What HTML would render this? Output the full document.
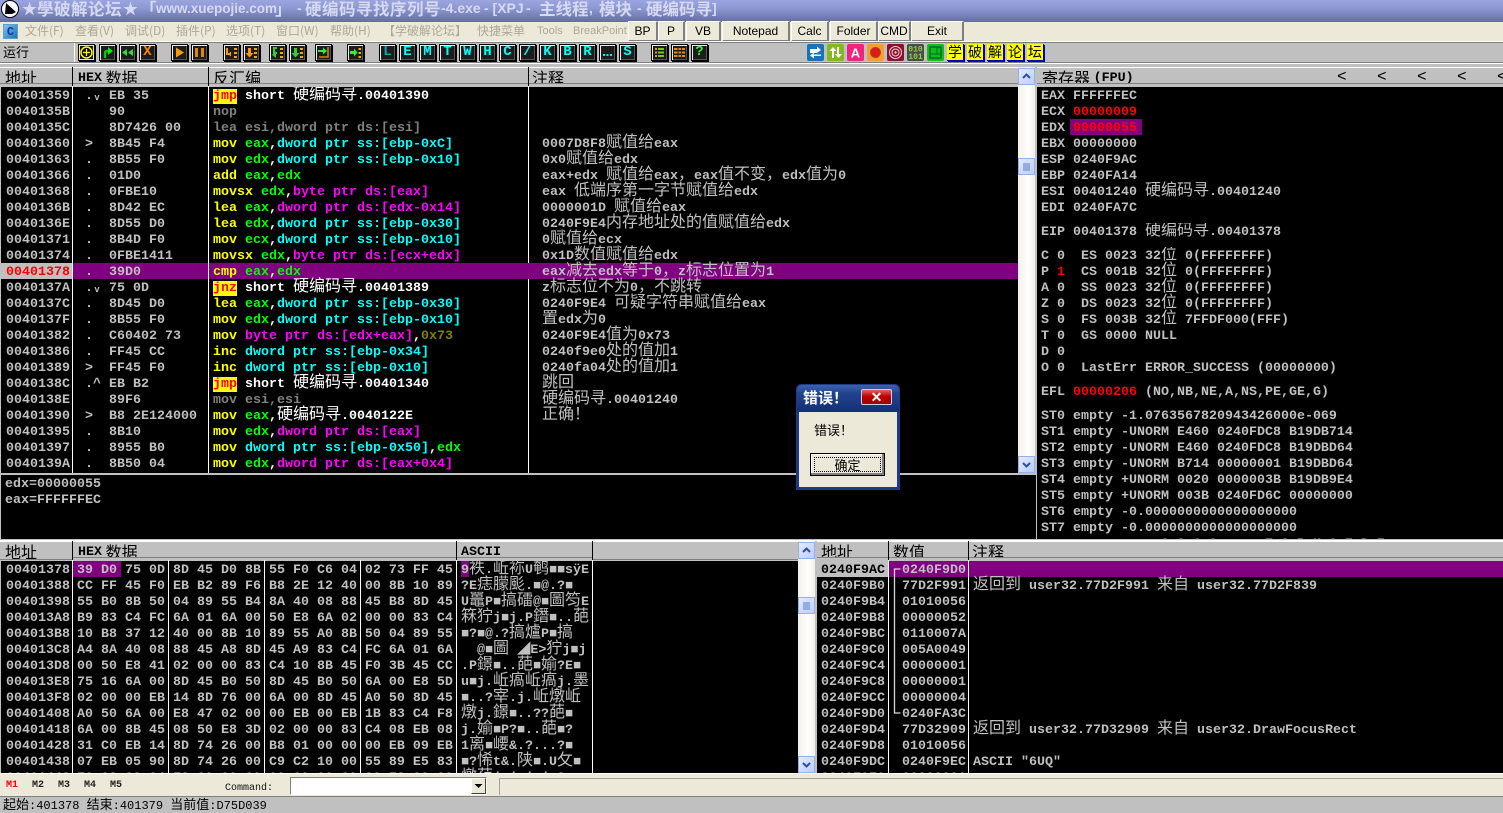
<!DOCTYPE html>
<html><head><meta charset="utf-8"><title>OllyDbg</title>
<style>
html,body{margin:0;padding:0;width:1503px;height:813px;overflow:hidden;background:#c0c0c0}
body{position:relative;font-family:"Liberation Mono","Noto Sans CJK SC",monospace}
.p{position:absolute}
.m{position:absolute;font:bold 13.33px/16px "Liberation Mono","Noto Sans CJK SC",monospace;color:#c0c0c0;white-space:pre;overflow:hidden;padding-top:2px;box-sizing:border-box}
i{font:normal 16px/0 "Noto Sans CJK SC","WenQuanYi Zen Hei",sans-serif;letter-spacing:0}
u{text-decoration:none}
.g{color:#0f0}.c{color:#0ff}.f{color:#f0f}.y{color:#ff0}.w{color:#fff}.d{color:#808080}.o{color:#808000}.r{color:#f00}
.j{background:#ff0;color:#f00}
.h{position:absolute;background:#c0c0c0;border-top:1px solid #fff;border-bottom:1px solid #808080;height:17px;font:normal 16px/18px "Noto Sans CJK SC",sans-serif;color:#000;white-space:pre;overflow:hidden;box-sizing:content-box}
.h b{font:bold 13.33px/18px "Liberation Mono",monospace;position:relative;top:-3px}
.v{position:absolute;width:1px;background:#fff}
.s{position:absolute;width:1px;background:#000}
.mn{position:absolute;top:23px;font:12px/16px "Noto Sans CJK SC","Liberation Sans",sans-serif;color:#aca899;white-space:pre}
.bt{position:absolute;top:21px;height:18px;background:#ece9d8;border-right:2px solid #808080;border-bottom:2px solid #808080;border-left:1px solid #fff;border-top:1px solid #fff;font:12px/19px "Liberation Sans",sans-serif;color:#000;text-align:center;box-sizing:content-box}
.t{position:absolute;top:44px;width:15px;height:15px;background:#1c1c1c;border:1px solid #000;box-shadow:inset 1px 1px 0 #eee,inset -1px -1px 0 #555,1px 1px 0 #000;font:bold 14px/15px "Liberation Mono",monospace;color:#0ff;text-align:center;overflow:hidden}
.t svg{display:block;width:15px;height:15px}
.q{position:absolute;top:44px;width:16px;height:16px;background:#ff0;border-right:1px solid #00c;border-bottom:1px solid #00c;box-shadow:1px 1px 0 #00c;font:14px/16px "Noto Sans CJK SC",sans-serif;color:#000;text-align:center;overflow:hidden}
.k{position:absolute;top:44px;width:17px;height:17px;overflow:hidden}
.k svg{display:block;width:17px;height:17px}
.sb{position:absolute;width:17px;background:linear-gradient(90deg,#f3f1ea,#fefefd 60%,#f1efe6)}
.sa{position:absolute;left:0;width:15px;height:15px;border:1px solid #8fb2f2;background:linear-gradient(135deg,#e3ebfd,#bccdf8);color:#2a4fa8;overflow:hidden}
.sa svg{display:block;width:15px;height:15px}
.tt{position:absolute;top:0;font:bold 16.5px/17px "Noto Sans CJK SC",sans-serif;color:#d6d9f2;white-space:pre}
.tl{position:absolute;top:0;font:bold 14px/17px "Liberation Sans",sans-serif;color:#d6d9f2;white-space:pre}
.ar{position:absolute;top:67px;width:10px;height:18px;color:#000;line-height:16px;font-weight:normal;font-size:16px}
</style></head><body>

<!-- title bar -->
<div class="p" style="left:0;top:0;width:1503px;height:22px;background:linear-gradient(#9aa5e0,#8f9ad5 35%,#636d9f)"></div>
<svg class="p" style="left:1px;top:0" width="19" height="19" viewBox="0 0 19 19"><circle cx="9" cy="9" r="8.5" fill="#fff" stroke="#000"/><path d="M5 3 L15 12 L11 14 L4 14 Z" fill="#000"/></svg>
<div class="tt" style="left:22px;font-size:15px">★</div>
<div class="tt" style="left:37px;letter-spacing:.5px">學破解论坛</div>
<div class="tt" style="left:123px;font-size:15px">★</div>
<div class="tt" style="left:140px">「</div>
<div class="tl" style="left:156px;font-size:13.5px">www.xuepojie.com</div>
<div class="tt" style="left:275px">」</div>
<div class="tl" style="left:297px">-</div>
<div class="tt" style="left:305px;letter-spacing:.5px">硬编码寻找序列号</div>
<div class="tl" style="left:441px">-4.exe</div>
<div class="tl" style="left:484px">- [XPJ</div>
<div class="tl" style="left:526px">-</div>
<div class="tt" style="left:539px">主线程</div>
<div class="tl" style="left:589px">,</div>
<div class="tt" style="left:599px">模块</div>
<div class="tl" style="left:637px">-</div>
<div class="tt" style="left:646px">硬编码寻</div>
<div class="tl" style="left:712px">]</div>

<!-- menu bar -->
<div class="p" style="left:0;top:22px;width:1503px;height:19px;background:#ece9d8"></div>
<div class="p" style="left:3px;top:24px;width:15px;height:15px;background:linear-gradient(135deg,#7cc4f2,#1f6fb5);font:bold 12px/15px 'Liberation Mono',monospace;color:#123a90;text-align:center;border:1px solid #5f9fd0;box-sizing:border-box">C</div>
<div class="mn" style="left:25px">文件(F)</div>
<div class="mn" style="left:75px">查看(V)</div>
<div class="mn" style="left:125px">调试(D)</div>
<div class="mn" style="left:176px">插件(P)</div>
<div class="mn" style="left:226px">选项(T)</div>
<div class="mn" style="left:276px">窗口(W)</div>
<div class="mn" style="left:330px">帮助(H)</div>
<div class="mn" style="left:383px">【学破解论坛】</div>
<div class="mn" style="left:477px">快捷菜单</div>
<div class="mn" style="left:537px;font:11px/16px 'Liberation Sans',sans-serif">Tools</div>
<div class="mn" style="left:573px;font:11px/16px 'Liberation Sans',sans-serif">BreakPoint</div>
<div class="bt" style="left:628px;width:27px">BP</div>
<div class="bt" style="left:658px;width:24px">P</div>
<div class="bt" style="left:686px;width:32px">VB</div>
<div class="bt" style="left:722px;width:65px">Notepad</div>
<div class="bt" style="left:791px;width:35px">Calc</div>
<div class="bt" style="left:830px;width:45px">Folder</div>
<div class="bt" style="left:878px;width:30px">CMD</div>
<div class="bt" style="left:911px;width:50px">Exit</div>

<!-- toolbar -->
<div class="p" style="left:0;top:41px;width:1503px;height:1px;background:#fff"></div>
<div class="p" style="left:0;top:42px;width:1503px;height:1px;background:#808080"></div>
<div class="p" style="left:0;top:62px;width:1503px;height:1px;background:#808080"></div>
<div class="p" style="left:0;top:63px;width:1503px;height:1px;background:#fff"></div>
<div class="p" style="left:3px;top:44px;font:13px/16px 'Noto Sans CJK SC',sans-serif;color:#000">运行</div>
<div class="p" style="left:74px;top:43px;width:1px;height:19px;background:#fff"></div>

<div class="t" style="left:78px;border-color:#000;box-shadow:inset 0 0 0 1px #ff0,1px 1px 0 #000;background:#111"><svg viewBox="0 0 15 15"><circle cx="7.5" cy="7.5" r="5.5" fill="none" stroke="#ff0" stroke-width="1.4"/><path d="M4 7.5H11M7.5 4V11" stroke="#ff0" stroke-width="1.2"/></svg></div>
<div class="t" style="left:99px"><svg viewBox="0 0 15 15"><path d="M5 13V8Q5 6 8 6H9" fill="none" stroke="#0c0" stroke-width="2.4"/><path d="M8 2L13 6L8 10Z" fill="#0e0"/></svg></div>
<div class="t" style="left:119px"><svg viewBox="0 0 15 15"><path d="M7 4V11L2 7.5ZM13 4V11L8 7.5Z" fill="#3d3"/></svg></div>
<div class="t" style="left:139px;color:#f80">X</div>
<div class="t" style="left:171px"><svg viewBox="0 0 15 15"><path d="M4 2.5V12.5L12 7.5Z" fill="#f90"/></svg></div>
<div class="t" style="left:191px"><svg viewBox="0 0 15 15"><path d="M3 3H6V12H3ZM9 3H12V12H9Z" fill="#d80"/></svg></div>
<div class="t" style="left:223px"><svg viewBox="0 0 15 15"><path d="M3 3V9H7" fill="none" stroke="#f90" stroke-width="2"/><path d="M7 6.5V11.5L4 9Z" fill="#f90"/><path d="M10 3H13V5H10ZM10 7H13V9H10ZM10 11H13V13H10Z" fill="#ea0"/></svg></div>
<div class="t" style="left:243px"><svg viewBox="0 0 15 15"><path d="M4 3H7V8H9.5L5.5 12.5L1.5 8H4Z" fill="#f90"/><path d="M10 3H13V5H10ZM10 7H13V9H10ZM10 11H13V13H10Z" fill="#ea0"/></svg></div>
<div class="t" style="left:269px"><svg viewBox="0 0 15 15"><path d="M7 3H4V8H7" fill="none" stroke="#3c3" stroke-width="2"/><path d="M6 6V13L2 10Z" fill="#3c3"/><path d="M10 3H13V5H10ZM10 7H13V9H10ZM10 11H13V13H10Z" fill="#ea0"/></svg></div>
<div class="t" style="left:289px"><svg viewBox="0 0 15 15"><path d="M4 3H7V8H9.5L5.5 12.5L1.5 8H4Z" fill="#3c3"/><path d="M10 3H13V5H10ZM10 7H13V9H10ZM10 11H13V13H10Z" fill="#ea0"/></svg></div>
<div class="t" style="left:315px"><svg viewBox="0 0 15 15"><path d="M2 5H7V2.5L11 6L7 9.5V7H2Z" fill="#3e3"/><path d="M12 2V12H3" fill="none" stroke="#c80" stroke-width="1.6"/></svg></div>
<div class="t" style="left:347px"><svg viewBox="0 0 15 15"><path d="M2 6H6V3.5L9.5 7.5L6 11.5V9H2Z" fill="#3e3"/><path d="M10.5 3H13V5H10.5ZM10.5 7H13V9H10.5ZM10.5 11H13V13H10.5Z" fill="#ea0"/></svg></div>
<div class="t" style="left:379px;color:#0aa">L</div>
<div class="t" style="left:399px">E</div>
<div class="t" style="left:419px">M</div>
<div class="t" style="left:439px">T</div>
<div class="t" style="left:459px">W</div>
<div class="t" style="left:479px">H</div>
<div class="t" style="left:499px">C</div>
<div class="t" style="left:519px">/</div>
<div class="t" style="left:539px">K</div>
<div class="t" style="left:559px">B</div>
<div class="t" style="left:579px">R</div>
<div class="t" style="left:599px"><svg viewBox="0 0 15 15"><path d="M3 9H5V11H3ZM6.500 9H8.500V11H6.500ZM10 9H12V11H10Z" fill="#0ee"/></svg></div>
<div class="t" style="left:619px">S</div>
<div class="t" style="left:651px"><svg viewBox="0 0 15 15"><path d="M3 3H5V5H3ZM3 6.500H5V8.500H3ZM3 10H5V12H3Z" fill="#e90"/><path d="M6 3H12V5H6ZM6 6.500H12V8.500H6ZM6 10H12V12H6Z" fill="#7c0"/></svg></div>
<div class="t" style="left:671px"><svg viewBox="0 0 15 15"><path d="M2 3H13V5H2ZM2 6.500H13V8.500H2ZM2 10H13V12H2Z" fill="#e80"/><path d="M5.500 3H6.500V12H5.500ZM9 3H10V12H9Z" fill="#222"/></svg></div>
<div class="t" style="left:691px;color:#3e3">?</div>

<div class="k" style="left:807px"><svg viewBox="0 0 17 17"><rect width="17" height="17" rx="2" fill="#1a72b8"/><path d="M3 5H10V2.500L14 6L10 9H3Z" fill="#fff"/><path d="M14 12H7V14.500L3 11.500L7 8.500V10.500H14Z" fill="#dff"/></svg></div>
<div class="k" style="left:827px"><svg viewBox="0 0 17 17"><rect width="17" height="17" rx="2" fill="#84b81c"/><path d="M5 14V7H2.500L6 3L9.500 7H7V14Z" fill="#fff"/><path d="M10 3V10H8L11.500 14L15 10H12V3Z" fill="#fff"/></svg></div>
<div class="k" style="left:847px"><svg viewBox="0 0 17 17"><rect width="17" height="17" rx="2" fill="#f0247c"/><text x="8.500" y="13.500" font-family="Liberation Sans" font-weight="bold" font-size="13" fill="#fff" text-anchor="middle">A</text></svg></div>
<div class="k" style="left:867px"><svg viewBox="0 0 17 17"><rect width="17" height="17" rx="2" fill="#f0a030"/><circle cx="8.500" cy="8.500" r="5" fill="#e01818" stroke="#b04020"/></svg></div>
<div class="k" style="left:887px"><svg viewBox="0 0 17 17"><rect width="17" height="17" rx="2" fill="#8c1030"/><circle cx="8.500" cy="8.500" r="6" fill="none" stroke="#f0d0d0"/><circle cx="8.500" cy="8.500" r="3.500" fill="none" stroke="#f0d0d0"/><circle cx="8.500" cy="8.500" r="1.200" fill="#f0d0d0"/></svg></div>
<div class="k" style="left:907px"><svg viewBox="0 0 17 17"><rect width="17" height="17" rx="2" fill="#4c4c4c"/><text x="8.500" y="7.500" font-family="Liberation Mono" font-weight="bold" font-size="8" fill="#8ad040" text-anchor="middle">010</text><text x="8.500" y="15" font-family="Liberation Mono" font-weight="bold" font-size="8" fill="#8ad040" text-anchor="middle">101</text></svg></div>
<div class="k" style="left:927px"><svg viewBox="0 0 17 17"><rect width="17" height="17" rx="2" fill="#0cc018"/><rect x="3" y="3" width="11" height="11" fill="none" stroke="#063" stroke-width="1.500"/><path d="M3 10H14M10 3V10" stroke="#063"/></svg></div>
<div class="q" style="left:947px">学</div>
<div class="q" style="left:967px">破</div>
<div class="q" style="left:987px">解</div>
<div class="q" style="left:1007px">论</div>
<div class="q" style="left:1027px">坛</div>

<!-- disasm headers -->
<div class="h" style="left:0;top:67px;width:72px;padding-left:5px;box-sizing:border-box">地址</div>
<div class="h" style="left:73px;top:67px;width:135px;padding-left:5px;box-sizing:border-box"><b>HEX</b> 数据</div>
<div class="h" style="left:209px;top:67px;width:319px;padding-left:4px;box-sizing:border-box">反汇编</div>
<div class="h" style="left:529px;top:67px;width:489px;padding-left:3px;box-sizing:border-box">注释</div>
<div class="s" style="left:72px;top:67px;height:19px"></div>
<div class="s" style="left:208px;top:67px;height:19px"></div>
<div class="s" style="left:528px;top:67px;height:19px"></div>

<!-- disasm body -->
<div class="p" style="left:1px;top:87px;width:1017px;height:386px;background:#000"></div>
<div class="p" style="left:0;top:263px;width:72px;height:16px;background:#c0c0c0"></div>
<div class="p" style="left:73px;top:263px;width:945px;height:16px;background:#800080"></div>
<div class="v" style="left:72px;top:86px;height:387px"></div>
<div class="v" style="left:208px;top:86px;height:387px"></div>
<div class="v" style="left:528px;top:86px;height:177px"></div>
<div class="v" style="left:528px;top:279px;height:194px"></div>

<div class="m" style="left:6px;top:87px;width:66px;height:386px">00401359
0040135B
0040135C
00401360
00401363
00401366
00401368
0040136B
0040136E
00401371
00401374
<u class="r">00401378</u>
0040137A
0040137C
0040137F
00401382
00401386
00401389
0040138C
0040138E
00401390
00401395
00401397
0040139A</div>
<div class="m" style="left:85px;top:87px;width:22px;height:386px">.ᵥ


&gt;
.
.
.
.
.
.
.
.
.ᵥ
.
.
.
.
&gt;
.^

&gt;
.
.
.</div>
<div class="m" style="left:109px;top:87px;width:98px;height:386px">EB 35
90
8D7426 00
8B45 F4
8B55 F0
01D0
0FBE10
8D42 EC
8D55 D0
8B4D F0
0FBE1411
39D0
75 0D
8D45 D0
8B55 F0
C60402 73
FF45 CC
FF45 F0
EB B2
89F6
B8 2E124000
8B10
8955 B0
8B50 04</div>
<div class="m" style="left:213px;top:87px;width:314px;height:386px"><u class="j">jmp</u> <u class="w">short <i>硬编码寻</i>.00401390</u>
<u class="d">nop</u>
<u class="d">lea esi,dword ptr ds:[esi]</u>
<u class="y">mov</u> <u class="g">eax</u><u class="w">,</u><u class="c">dword ptr ss:[ebp-0xC]</u>
<u class="y">mov</u> <u class="g">edx</u><u class="w">,</u><u class="c">dword ptr ss:[ebp-0x10]</u>
<u class="y">add</u> <u class="g">eax</u><u class="w">,</u><u class="g">edx</u>
<u class="y">movsx</u> <u class="g">edx</u><u class="w">,</u><u class="f">byte ptr ds:[eax]</u>
<u class="y">lea</u> <u class="g">eax</u><u class="w">,</u><u class="f">dword ptr ds:[edx-0x14]</u>
<u class="y">lea</u> <u class="g">edx</u><u class="w">,</u><u class="c">dword ptr ss:[ebp-0x30]</u>
<u class="y">mov</u> <u class="g">ecx</u><u class="w">,</u><u class="c">dword ptr ss:[ebp-0x10]</u>
<u class="y">movsx</u> <u class="g">edx</u><u class="w">,</u><u class="f">byte ptr ds:[ecx+edx]</u>
<u class="y">cmp</u> <u class="g">eax</u><u class="w">,</u><u class="g">edx</u>
<u class="j">jnz</u> <u class="w">short <i>硬编码寻</i>.00401389</u>
<u class="y">lea</u> <u class="g">eax</u><u class="w">,</u><u class="c">dword ptr ss:[ebp-0x30]</u>
<u class="y">mov</u> <u class="g">edx</u><u class="w">,</u><u class="c">dword ptr ss:[ebp-0x10]</u>
<u class="y">mov</u> <u class="f">byte ptr ds:[edx+eax]</u><u class="w">,</u><u class="o">0x73</u>
<u class="y">inc</u> <u class="c">dword ptr ss:[ebp-0x34]</u>
<u class="y">inc</u> <u class="c">dword ptr ss:[ebp-0x10]</u>
<u class="j">jmp</u> <u class="w">short <i>硬编码寻</i>.00401340</u>
<u class="d">mov esi,esi</u>
<u class="y">mov</u> <u class="g">eax</u><u class="w">,<i>硬编码寻</i>.0040122E</u>
<u class="y">mov</u> <u class="g">edx</u><u class="w">,</u><u class="f">dword ptr ds:[eax]</u>
<u class="y">mov</u> <u class="c">dword ptr ss:[ebp-0x50]</u><u class="w">,</u><u class="g">edx</u>
<u class="y">mov</u> <u class="g">edx</u><u class="w">,</u><u class="f">dword ptr ds:[eax+0x4]</u></div>
<div class="m" style="left:542px;top:87px;width:470px;height:386px">


0007D8F8<i>赋值给</i>eax
0x0<i>赋值给</i>edx
eax+edx <i>赋值给</i>eax<i>，</i>eax<i>值不变，</i>edx<i>值为</i>0
eax <i>低端序第一字节赋值给</i>edx
0000001D <i>赋值给</i>eax
0240F9E4<i>内存地址处的值赋值给</i>edx
0<i>赋值给</i>ecx
0x1D<i>数值赋值给</i>edx
eax<i>减去</i>edx<i>等于</i>0<i>，</i>z<i>标志位置为</i>1
z<i>标志位不为</i>0<i>，不跳转</i>
0240F9E4 <i>可疑字符串赋值给</i>eax
<i>置</i>edx<i>为</i>0
0240F9E4<i>值为</i>0x73
0240f9e0<i>处的值加</i>1
0240fa04<i>处的值加</i>1
<i>跳回</i>
<i>硬编码寻</i>.00401240
<i>正确！</i></div>

<!-- disasm scrollbar -->
<div class="sb" style="left:1018px;top:67px;height:406px">
<div class="sa" style="top:1px"><svg viewBox="0 0 15 15"><path d="M4 9L7.500 5.500L11 9" fill="none" stroke="#2a4fa8" stroke-width="2"/></svg></div>
<div class="sa" style="top:91px"><svg viewBox="0 0 15 15"><path d="M4 5H11M4 7H11M4 9H11M4 11H11" stroke="#5a7ccc"/></svg></div>
<div class="sa" style="top:389px"><svg viewBox="0 0 15 15"><path d="M4 6L7.500 9.500L11 6" fill="none" stroke="#2a4fa8" stroke-width="2"/></svg></div>
</div>

<!-- info pane -->
<div class="p" style="left:1px;top:475px;width:1035px;height:64px;background:#000"></div>
<div class="m" style="left:5px;top:475px;width:300px;height:50px">edx=00000055
eax=FFFFFFEC</div>

<!-- registers -->
<div class="h" style="left:1037px;top:67px;width:466px;padding-left:5px;box-sizing:border-box">寄存器 <b>(FPU)</b></div>
<div class="m ar" style="left:1337px">&lt;</div>
<div class="m ar" style="left:1377px">&lt;</div>
<div class="m ar" style="left:1417px">&lt;</div>
<div class="m ar" style="left:1457px">&lt;</div>
<div class="m ar" style="left:1497px;width:6px">&lt;</div>
<div class="p" style="left:1037px;top:87px;width:466px;height:452px;background:#000"></div>
<div class="p" style="left:1070px;top:119px;width:72px;height:16px;background:#800080"></div>
<div class="m" style="left:1041px;top:87px;width:460px;height:136px">EAX FFFFFFEC
ECX <u class="r">00000009</u>
EDX <u class="r">00000055</u>
EBX 00000000
ESP 0240F9AC
EBP 0240FA14
ESI 00401240 <i>硬编码寻</i>.00401240
EDI 0240FA7C</div>
<div class="m" style="left:1041px;top:223px;width:460px;height:18px">EIP 00401378 <i>硬编码寻</i>.00401378</div>
<div class="m" style="left:1041px;top:247px;width:460px;height:130px">C 0  ES 0023 32<i>位</i> 0(FFFFFFFF)
P <u class="r">1</u>  CS 001B 32<i>位</i> 0(FFFFFFFF)
A 0  SS 0023 32<i>位</i> 0(FFFFFFFF)
Z 0  DS 0023 32<i>位</i> 0(FFFFFFFF)
S 0  FS 003B 32<i>位</i> 7FFDF000(FFF)
T 0  GS 0000 NULL
D 0
O 0  LastErr ERROR_SUCCESS (00000000)</div>
<div class="m" style="left:1041px;top:383px;width:460px;height:18px">EFL <u class="r">00000206</u> (NO,NB,NE,A,NS,PE,GE,G)</div>
<div class="m" style="left:1041px;top:407px;width:460px;height:132px">ST0 empty -1.0763567820943426000e-069
ST1 empty -UNORM E460 0240FDC8 B19DB714
ST2 empty -UNORM E460 0240FDC8 B19DBD64
ST3 empty -UNORM B714 00000001 B19DBD64
ST4 empty +UNORM 0020 0000003B B19DB9E4
ST5 empty +UNORM 003B 0240FD6C 00000000
ST6 empty -0.0000000000000000000
ST7 empty -0.0000000000000000000
               3 2 1 0      E S P U O Z D I</div>

<div class="p" style="left:0;top:473px;width:1036px;height:2px;background:#c0c0c0"></div>
<div class="p" style="left:0;top:539px;width:1503px;height:1px;background:#c0c0c0"></div>
<div class="p" style="left:0;top:540px;width:1503px;height:1px;background:#fff"></div>

<!-- dump headers -->
<div class="h" style="left:0;top:541px;height:17px;padding-left:5px;box-sizing:content-box;width:67px">地址</div>
<div class="h" style="left:73px;top:541px;width:383px;padding-left:5px;box-sizing:border-box"><b>HEX</b> 数据</div>
<div class="h" style="left:457px;top:541px;width:135px;padding-left:4px;box-sizing:border-box"><b>ASCII</b></div>
<div class="h" style="left:593px;top:541px;width:205px"></div>
<div class="s" style="left:72px;top:541px;height:19px"></div>
<div class="s" style="left:456px;top:541px;height:19px"></div>
<div class="s" style="left:592px;top:541px;height:19px"></div>

<!-- dump body -->
<div class="p" style="left:1px;top:561px;width:797px;height:212px;background:#000"></div>
<div class="p" style="left:73px;top:561px;width:48px;height:16px;background:#800080"></div>
<div class="p" style="left:461px;top:561px;width:8px;height:16px;background:#800080"></div>
<div class="v" style="left:72px;top:560px;height:213px"></div>
<div class="v" style="left:168px;top:560px;height:213px"></div>
<div class="v" style="left:264px;top:560px;height:213px"></div>
<div class="v" style="left:360px;top:560px;height:213px"></div>
<div class="v" style="left:456px;top:560px;height:213px"></div>
<div class="v" style="left:592px;top:560px;height:213px"></div>
<div class="m" style="left:6px;top:561px;width:66px;height:212px">00401378
00401388
00401398
004013A8
004013B8
004013C8
004013D8
004013E8
004013F8
00401408
00401418
00401428
00401438
00401448</div>
<div class="m" style="left:77px;top:561px;width:380px;height:212px">39 D0 75 0D 8D 45 D0 8B 55 F0 C6 04 02 73 FF 45
CC FF 45 F0 EB B2 89 F6 B8 2E 12 40 00 8B 10 89
55 B0 8B 50 04 89 55 B4 8A 40 08 88 45 B8 8D 45
B9 83 C4 FC 6A 01 6A 00 50 E8 6A 02 00 00 83 C4
10 B8 37 12 40 00 8B 10 89 55 A0 8B 50 04 89 55
A4 8A 40 08 88 45 A8 8D 45 A9 83 C4 FC 6A 01 6A
00 50 E8 41 02 00 00 83 C4 10 8B 45 F0 3B 45 CC
75 16 6A 00 8D 45 B0 50 8D 45 B0 50 6A 00 E8 5D
02 00 00 EB 14 8D 76 00 6A 00 8D 45 A0 50 8D 45
A0 50 6A 00 E8 47 02 00 00 EB 00 EB 1B 83 C4 F8
6A 00 8B 45 08 50 E8 3D 02 00 00 83 C4 08 EB 08
31 C0 EB 14 8D 74 26 00 B8 01 00 00 00 EB 09 EB
07 EB 05 90 8D 74 26 00 C9 C2 10 00 55 89 E5 83
EC 08 83 C4 F8 6A 00 6A 00 6A 00 6A 00 E8 00 00</div>
<div class="m" style="left:461px;top:561px;width:131px;height:212px">9<i>袟</i>.<i>岴袮</i>U<i>鹌</i>■■sÿE
?E<i>痣朦颩</i>.■@.?■
U<i>鼉</i>P■<i>搞礌</i>@■<i>圖笉</i>E
<i>箖狞</i>j■j.P<i>鐕</i>■..<i>葩</i>
■?■@.?<i>搞爐</i>P■<i>搞</i>
  @■<i>圖</i> ◢E&gt;<i>狞</i>j■j
.P<i>鐛</i>■..<i>葩</i>■<i>媮</i>?E■
u■j.<i>岴瘑岴瘑</i>j.<i>墨</i>
■..?<i>宰</i>.j.<i>岴燉岴</i>
<i>燉</i>j.<i>鐛</i>■..??<i>葩</i>■
j.<i>媮</i>■P?■..<i>葩</i>■?
1<i>离</i>■<i>崾</i>&amp;.?...?■
■?<i>悕</i>t&amp;.<i>陕</i>■.U<i>攵</i>■
<i>燉葩</i>j.j.j.j.?</div>

<!-- dump scrollbar -->
<div class="sb" style="left:798px;top:541px;height:232px">
<div class="sa" style="top:1px"><svg viewBox="0 0 15 15"><path d="M4 9L7.500 5.500L11 9" fill="none" stroke="#2a4fa8" stroke-width="2"/></svg></div>
<div class="sa" style="top:56px"><svg viewBox="0 0 15 15"><path d="M4 5H11M4 7H11M4 9H11M4 11H11" stroke="#5a7ccc"/></svg></div>
<div class="sa" style="top:215px"><svg viewBox="0 0 15 15"><path d="M4 6L7.500 9.500L11 6" fill="none" stroke="#2a4fa8" stroke-width="2"/></svg></div>
</div>

<!-- stack headers -->
<div class="h" style="left:817px;top:541px;width:71px;padding-left:4px;box-sizing:border-box">地址</div>
<div class="h" style="left:889px;top:541px;width:79px;padding-left:4px;box-sizing:border-box">数值</div>
<div class="h" style="left:969px;top:541px;width:534px;padding-left:3px;box-sizing:border-box">注释</div>
<div class="s" style="left:888px;top:541px;height:19px"></div>
<div class="s" style="left:968px;top:541px;height:19px"></div>

<!-- stack body -->
<div class="p" style="left:815px;top:561px;width:688px;height:212px;background:#000"></div>
<div class="p" style="left:815px;top:561px;width:2px;height:212px;background:#c0c0c0"></div>
<div class="p" style="left:817px;top:561px;width:71px;height:16px;background:#c0c0c0"></div>
<div class="p" style="left:889px;top:561px;width:614px;height:16px;background:#800080"></div>
<div class="v" style="left:888px;top:560px;height:213px"></div>
<div class="v" style="left:968px;top:560px;height:213px"></div>
<div class="m" style="left:821px;top:561px;width:66px;height:212px"><u style="color:#000">0240F9AC</u>
0240F9B0
0240F9B4
0240F9B8
0240F9BC
0240F9C0
0240F9C4
0240F9C8
0240F9CC
0240F9D0
0240F9D4
0240F9D8
0240F9DC
0240F9E0</div>
<div class="m" style="left:902px;top:561px;width:66px;height:212px">0240F9D0
77D2F991
01010056
00000052
0110007A
005A0049
00000001
00000001
00000004
0240FA3C
77D32909
01010056
0240F9EC
00000001</div>
<svg class="p" style="left:890px;top:561px" width="12" height="160" viewBox="0 0 12 160"><path d="M10.500 8H4.500V152H10.500" fill="none" stroke="#d8d8d8" stroke-width="1.300"/></svg>
<div class="m" style="left:973px;top:561px;width:520px;height:212px">
<i>返回到</i> user32.77D2F991 <i>来自</i> user32.77D2F839








<i>返回到</i> user32.77D32909 <i>来自</i> user32.DrawFocusRect

ASCII "6UQ"</div>

<!-- bottom bar -->
<div class="p" style="left:0;top:773px;width:1503px;height:1px;background:#fff"></div>
<div class="p" style="left:0;top:774px;width:1503px;height:22px;background:#ece9d8"></div>
<div class="p" style="left:0;top:796px;width:1503px;height:1px;background:#808080"></div>
<div class="p" style="left:6px;top:780px;font:bold 10px/12px 'Liberation Mono',monospace;color:#f00">M1</div>
<div class="p" style="left:32px;top:780px;font:bold 10px/12px 'Liberation Mono',monospace;color:#222">M2</div>
<div class="p" style="left:58px;top:780px;font:bold 10px/12px 'Liberation Mono',monospace;color:#222">M3</div>
<div class="p" style="left:84px;top:780px;font:bold 10px/12px 'Liberation Mono',monospace;color:#222">M4</div>
<div class="p" style="left:110px;top:780px;font:bold 10px/12px 'Liberation Mono',monospace;color:#222">M5</div>
<div class="p" style="left:225px;top:783px;font:10px/12px 'Liberation Mono',monospace;color:#111">Command:</div>
<div class="p" style="left:290px;top:777px;width:197px;height:18px;background:#fff;border:1px solid #808080;border-right-color:#fff;border-bottom-color:#fff;box-sizing:border-box"></div>
<div class="p" style="left:471px;top:778px;width:15px;height:16px;background:#ece9d8;border-right:1px solid #404040;border-bottom:1px solid #404040;border-left:1px solid #fff;border-top:1px solid #fff;box-sizing:border-box"><svg width="13" height="14" viewBox="0 0 13 14" style="display:block"><path d="M2.500 5H10.500L6.500 9Z" fill="#000"/></svg></div>
<div class="p" style="left:499px;top:778px;width:1004px;height:17px;border-left:1px solid #a0a0a0;border-top:1px solid #a0a0a0;box-sizing:border-box"></div>

<!-- status -->
<div class="p" style="left:3px;top:798px;font:12px/15px 'Liberation Mono','Noto Sans CJK SC',monospace;color:#000;white-space:pre"><span style="font-size:13px">起始</span>:401378 <span style="font-size:13px">结束</span>:401379 <span style="font-size:13px">当前值</span>:D75D039</div>

<!-- dialog -->
<div class="p" style="left:796px;top:384px;width:104px;height:106px;background:#1c3a85;border-radius:5px 5px 0 0"></div>
<div class="p" style="left:797px;top:385px;width:102px;height:27px;background:linear-gradient(#3f62ac,#21448f 30%,#142f75);border-radius:5px 5px 0 0"></div>
<div class="p" style="left:803px;top:388px;font:bold 15px/20px 'Noto Sans CJK SC',sans-serif;color:#fff">错误！</div>
<div class="p" style="left:861px;top:389px;width:31px;height:16px;background:linear-gradient(#e86060,#c00000 45%,#a00000);border:1px solid #c8d0e8;box-sizing:border-box;font:bold 14px/14px 'Liberation Sans',sans-serif;color:#fff;text-align:center;border-radius:2px">✕</div>
<div class="p" style="left:799px;top:412px;width:98px;height:75px;background:#ece9d8"></div>
<div class="p" style="left:814px;top:421px;font:13px/18px 'Noto Sans CJK SC',sans-serif;color:#000">错误！</div>
<div class="p" style="left:810px;top:453px;width:75px;height:23px;background:#ece9d8;border:1px solid #000;box-shadow:inset -2px -2px 0 #808080,inset 1px 1px 0 #fff;box-sizing:border-box"></div>
<div class="p" style="left:814px;top:457px;width:67px;height:15px;border:1px dotted #000;box-sizing:border-box;font:13px/13px 'Noto Sans CJK SC',sans-serif;color:#000;text-align:center">确定</div>
</body></html>
